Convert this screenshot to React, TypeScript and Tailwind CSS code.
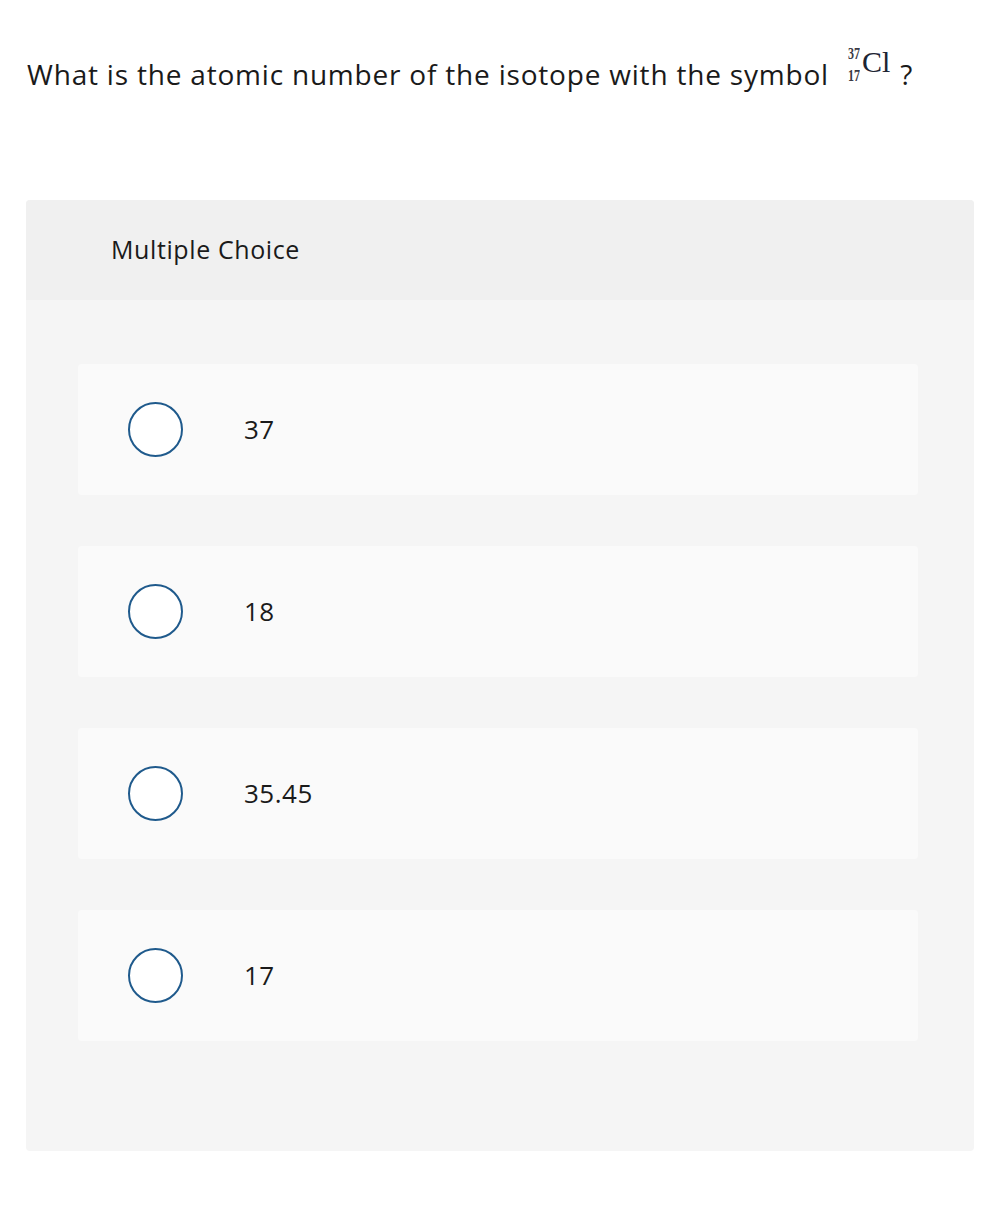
import React, { useState } from 'react';

const options = ['37', '18', '35.45', '17'];

const IsotopeSymbol: React.FC = () => (
  <span className="inline-flex items-center ml-[15px] mr-[10px] -translate-y-[9px] text-[#1c2433] tracking-normal" style={{ fontFamily: '"Liberation Serif", serif' }}>
    <span className="flex flex-col items-end leading-none text-[16px] font-bold text-[#3a3a44] scale-x-[0.75] origin-right">
      <span>37</span>
      <span className="mt-[6px]">17</span>
    </span>
    <span className="text-[30px] leading-none ml-[2px] -mt-[6px]">Cl</span>
  </span>
);

const App: React.FC = () => {
  const [selected, setSelected] = useState<string | null>(null);

  return (
    <div className="min-h-screen bg-white px-[26px] pt-[46px] text-[#1a1a1a]" style={{ fontFamily: '"Open Sans", sans-serif' }}>
      {/* Question */}
      <div className="pl-[1px] text-[28px] tracking-[0.8px] leading-[56px] flex items-center">
        <span>What is the atomic number of the isotope with the symbol</span>
        <IsotopeSymbol />
        <span>?</span>
      </div>

      {/* Answer card */}
      <div className="mt-[98px] w-[948px] rounded-[4px] overflow-hidden bg-[#f5f5f5]">
        <div className="h-[100px] bg-[#f0f0f0] flex items-center pl-[85px] text-[25px] tracking-[0.6px]">
          Multiple Choice
        </div>
        <div className="pl-[52px] pr-[56px] pt-[64px] pb-[110px] flex flex-col gap-[51px]">
          {options.map((opt) => (
            <label
              key={opt}
              onClick={() => setSelected(opt)}
              className="h-[131px] bg-[#fafafa] rounded-[4px] flex items-center pl-[50px] cursor-pointer"
            >
              <span className="w-[55px] h-[55px] rounded-full border-2 border-[#1f5a8c] bg-white flex items-center justify-center shrink-0">
                {selected === opt && <span className="w-[29px] h-[29px] rounded-full bg-[#1f5a8c]" />}
              </span>
              <span className="ml-[61px] text-[26px] tracking-[0.5px]">{opt}</span>
            </label>
          ))}
        </div>
      </div>
    </div>
  );
};

export default App;
